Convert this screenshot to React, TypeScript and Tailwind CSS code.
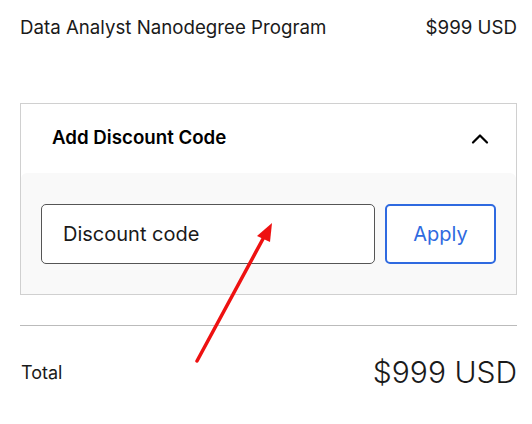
import { ChevronUp } from "lucide-react";

export default function App() {
  return (
    <div className="relative w-[532px] h-[424px] bg-white text-[#1a1a1a] font-['Inter',sans-serif]">
      <div className="pl-5 pr-[15px]">
        <div className="flex justify-between items-center h-[56px] text-[18.7px]">
          <span>Data Analyst Nanodegree Program</span>
          <span>$999 USD</span>
        </div>

        <div className="mt-[47px] border border-[#d0d0d0]">
          <div className="flex items-center justify-between h-[69px] pl-[31px] pr-[22px]">
            <span className="text-[18.7px] font-semibold text-black">Add Discount Code</span>
            <ChevronUp size={28} strokeWidth={1.9} className="text-black" />
          </div>
          <div className="bg-[#f9f9f9] rounded-t-md flex gap-[10px] pl-5 pr-5 pt-[31px] pb-[30px]">
            <div className="flex-1 h-[60px] border border-[#555] rounded-[5px] bg-white flex items-center pl-[21px] text-[20px]">
              Discount code
            </div>
            <button className="w-[111px] h-[60px] border-2 border-[#2f6ae0] rounded-[5px] bg-white text-[#2f6ae0] text-[20px]">
              Apply
            </button>
          </div>
        </div>

        <div className="mt-[30px] border-t border-[#bbb]" />

        <div className="flex justify-between items-center h-[92px]">
          <span className="text-[18px] pl-px">Total</span>
          <span className="text-[30px] font-light">$999 USD</span>
        </div>
      </div>

      <svg className="absolute left-0 top-0 pointer-events-none" width="532" height="424">
        <line x1="197" y1="361" x2="264" y2="237" stroke="#ee1111" strokeWidth="3.5" strokeLinecap="round" />
        <polygon points="272,223 257,236 270,242" fill="#ee1111" />
      </svg>
    </div>
  );
}
